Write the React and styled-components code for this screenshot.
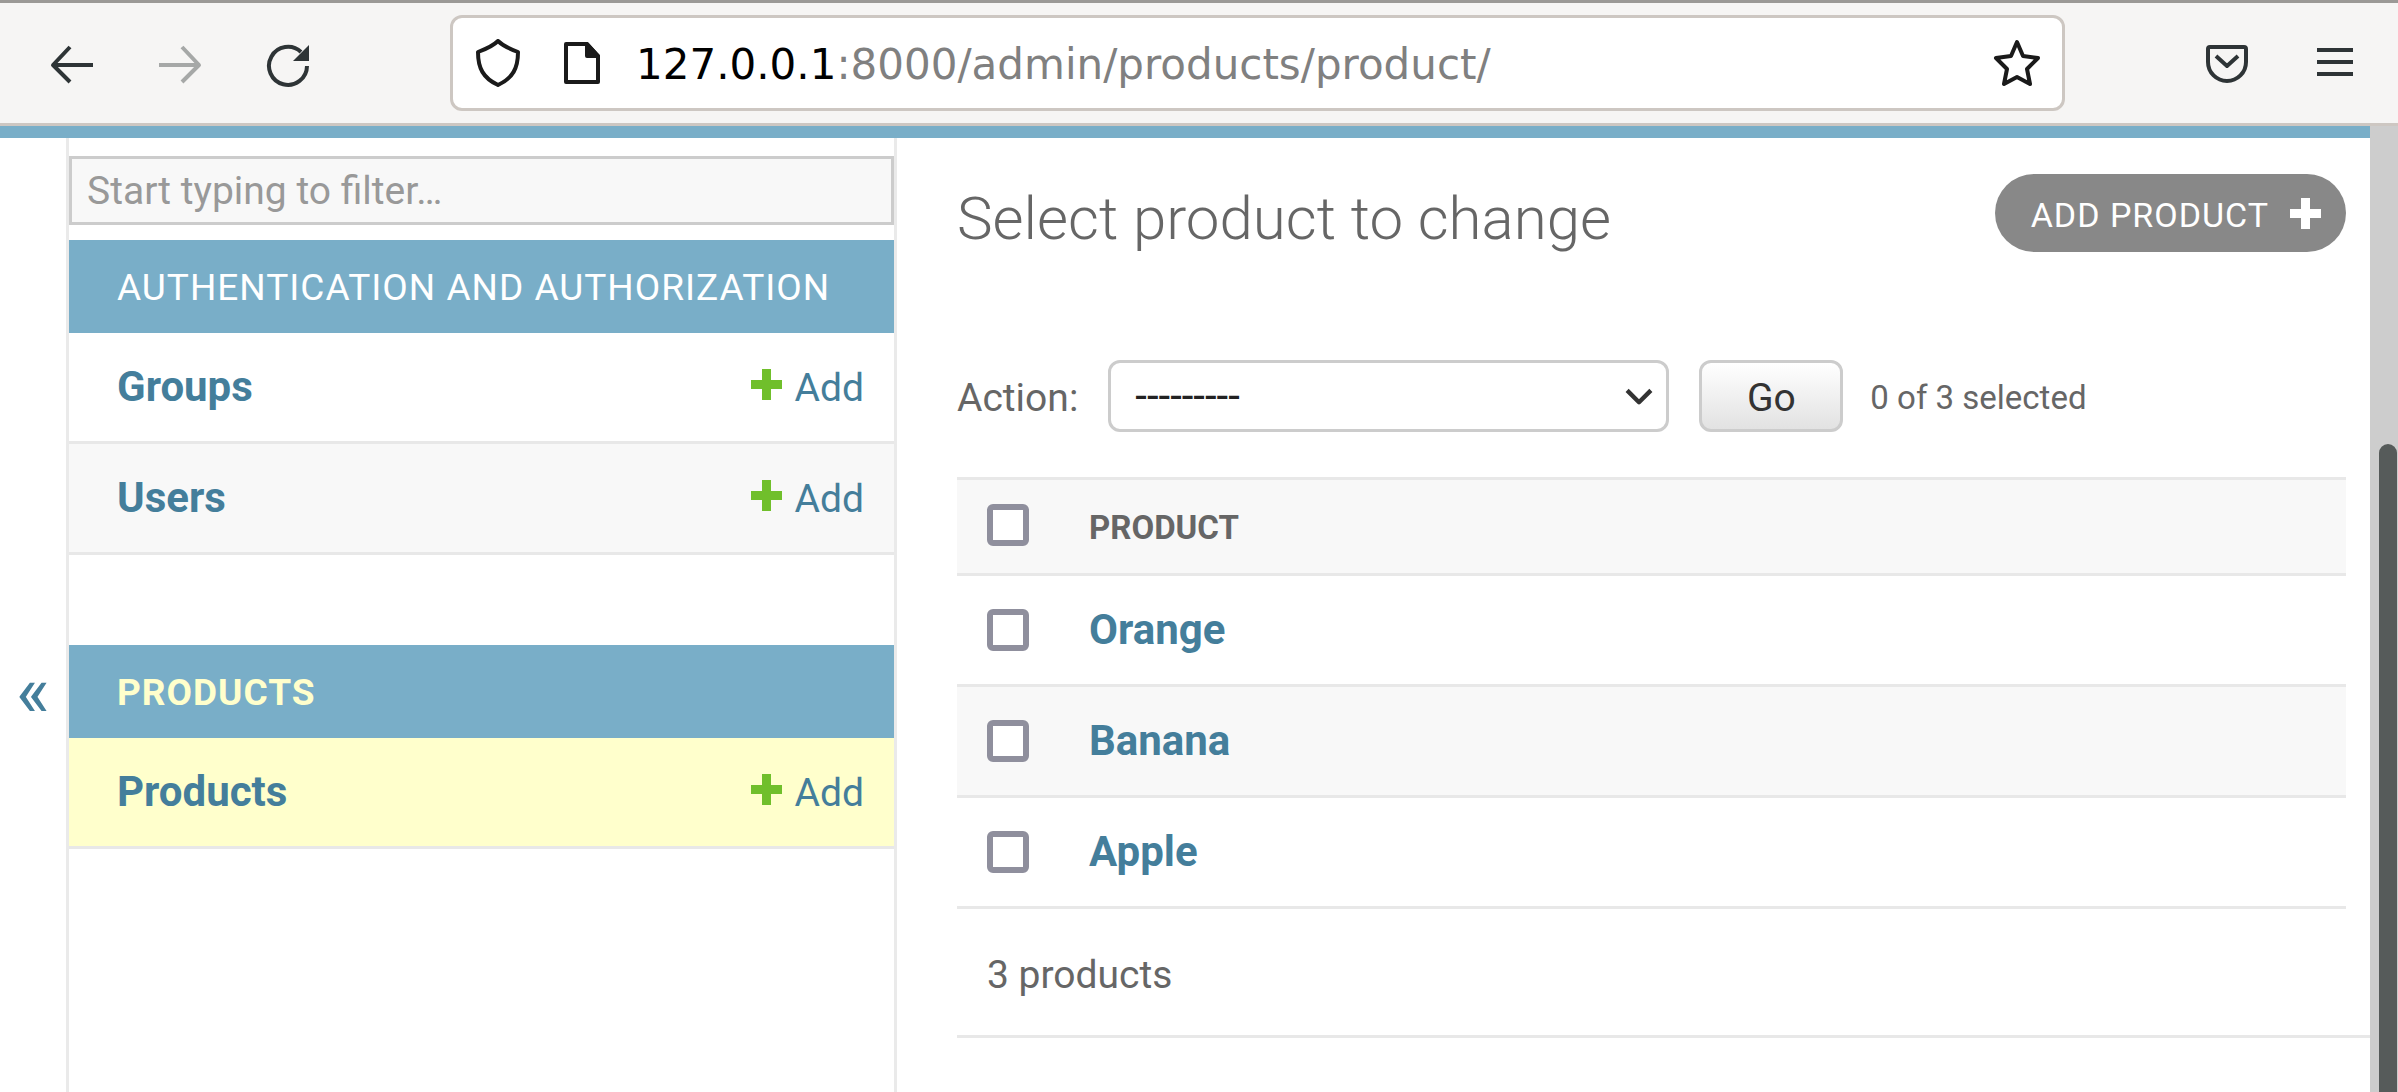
import React from "react";
import styled, { createGlobalStyle } from "styled-components";

const Global = createGlobalStyle`
  * { box-sizing: border-box; }
  html, body, #root { height: 100%; margin: 0; }
  body { background: #fff; color: #666; font: 39px/48px Roboto, "Liberation Sans", sans-serif; }
  a { color: #447e9b; text-decoration: none; }
  button { cursor: pointer; }
`;
const Page = styled.div`display: flex; flex-direction: column; min-height: 100%;`;
const Toolbar = styled.header`
  display: flex; align-items: center; height: 126px; padding: 0 36px 0 45px;
  background: #f6f5f4; border-top: 3px solid #9b9996; border-bottom: 3px solid #cdc7c2;
`;
const IconButton = styled.button`
  display: flex; align-items: center; justify-content: center; width: 54px; height: 54px;
  padding: 0; border: 0; background: none; color: #2e3436;
  &:disabled { color: #a6a8a7; }
`;
const NavButtons = styled.nav`display: flex; gap: 54px;`;
const UrlBar = styled.div`
  display: flex; align-items: center; gap: 36px; flex: 1; height: 96px;
  margin: 0 135px; padding: 0 18px 0 21px; color: #1a1a1a;
  background: #fff; border: 3px solid #cdc7c2; border-radius: 12px;
  button { color: inherit; }
`;
const SiteIcons = styled.div`display: flex; gap: 42px;`;
const Url = styled.div`
  flex: 1; padding-top: 3px; font: 42px/54px "DejaVu Sans", sans-serif; color: #808080; white-space: nowrap;
  b { font-weight: 400; color: #000; }
`;
const ToolbarEnd = styled.div`display: flex; gap: 54px;`;
const Viewport = styled.div`display: flex; flex: 1;`;
const Site = styled.div`display: flex; flex: 1; border-top: 12px solid #79aec8;`;
const SidebarToggle = styled.button`
  width: 69px; padding: 153px 0 0; border: 0; border-right: 3px solid #eaeaea;
  background: #fff; color: #447e9b; font: 72px/72px Roboto, sans-serif;
`;
const Sidebar = styled.nav`width: 828px; padding-top: 18px; border-right: 3px solid #eaeaea;`;
const Filter = styled.input`
  display: block; width: 100%; height: 69px; margin-bottom: 15px; padding: 0 15px;
  border: 3px solid #ccc; border-radius: 0; background: #f8f8f8; font: 39px/48px Roboto, sans-serif;
  &::placeholder { color: #999; opacity: 1; }
`;
const AppTable = styled.table`width: 100%; margin-bottom: 90px; border-collapse: separate; border-spacing: 0;`;
const Caption = styled.caption`
  padding: 3px 48px 0; background: #79aec8; color: ${p => (p.$current ? "#ffc" : "#fff")};
  font-size: 37px; line-height: 90px; letter-spacing: 1px; text-align: left; text-transform: uppercase;
  font-weight: ${p => (p.$current ? 700 : 400)};
`;
const ModelRow = styled.tr`
  background: ${p => (p.$current ? "#ffc" : "#fff")};
  &:nth-child(even) { background: #f8f8f8; }
  > * { vertical-align: baseline; border-bottom: 3px solid #e8e8e8; }
`;
const ModelName = styled.th`padding: 30px 48px; text-align: left; font-size: 42px; line-height: 48px;`;
const AddCell = styled.td`padding: 0 30px; text-align: right;`;
const AddLink = styled.a`display: inline-flex; align-items: baseline; gap: 12px;`;
const Main = styled.main`flex: 1; padding: 36px 0 0 60px;`;
const Heading = styled.div`display: flex; justify-content: space-between; height: 186px; padding-right: 24px;`;
const Title = styled.h1`margin: 0; padding-top: 9px; font-size: 60px; line-height: 72px; font-weight: 300;`;
const AddButton = styled.a`
  display: flex; align-items: center; gap: 20px; height: 78px; padding: 0 24px 0 36px;
  border-radius: 39px; background: #888; color: #fff;
  font-size: 34px; letter-spacing: 1px; text-transform: uppercase;
`;
const Text = styled.span`padding-top: 3px;`;
const Actions = styled.div`display: flex; align-items: center; height: 72px; margin-bottom: 45px;`;
const ActionLabel = styled.label`display: flex; align-items: center; gap: 30px;`;
const SelectBox = styled.span`
  display: grid; align-items: center; width: 561px; color: #333;
  > * { grid-area: 1 / 1; }
  svg { justify-self: end; margin-right: 15px; pointer-events: none; }
`;
const Select = styled.select`
  appearance: none; width: 100%; height: 72px; padding: 0 24px; border: 3px solid #ccc; border-radius: 12px;
  background: #fff; color: #222; font: 42px/48px Roboto, sans-serif;
`;
const Go = styled.button`
  width: 144px; height: 72px; margin: 0 27px 0 30px; padding: 3px 0 0; border: 3px solid #ccc; border-radius: 12px;
  background: linear-gradient(#fff, #e2e2e2); color: #333; font: 39px/48px Roboto, sans-serif;
`;
const Counter = styled(Text)`font-size: 33px;`;
const Results = styled.table`width: calc(100% - 24px); border-collapse: collapse; border-top: 3px solid #e8e8e8;`;
const ResultRow = styled.tr`
  height: 111px; border-bottom: 3px solid #e8e8e8; font-size: 42px;
  &:nth-child(even) { background: #f8f8f8; }
`;
const HeadRow = styled.tr`height: 96px; border-bottom: 3px solid #e8e8e8; background: #f8f8f8; font-size: 33px;`;
const Cell = styled.th`padding: 0 30px; text-align: left;`;
const HeadCell = styled(Cell)`padding-top: 3px;`;
const CheckCell = styled.td`width: 102px; padding: 0 30px;`;
const HeadCheckCell = styled(CheckCell)`padding-bottom: 3px;`;
const Check = styled.input`
  appearance: none; display: block; width: 42px; height: 42px; margin: 0;
  border: 6px solid #8f8f9d; border-radius: 6px; background: #fff;
`;
const Paginator = styled.p`margin: 0; height: 129px; padding: 42px 30px 0; border-bottom: 3px solid #e8e8e8;`;
const Scrollbar = styled.div`width: 28px; padding: 318px 1px 0 9px; background: #cdcdcd; display: flex;`;
const Thumb = styled.div`flex: 1; background: #565b5a; border-radius: 9px 9px 0 0;`;

const Stroke = ({ size = 48, box = 48, w = 4, children }) => (
  <svg width={size} height={size === 36 ? 48 : size} viewBox={`0 0 ${box} 48`} fill="none" stroke="currentColor" strokeWidth={w} strokeLinejoin="round" aria-hidden="true">{children}</svg>
);
const Plus = ({ color }) => (
  <svg width="33" height="33" viewBox="0 0 33 33" aria-hidden="true"><path fill={color} d="M12 1h9v11h11v9H21v11h-9V21H1v-9h11z" /></svg>
);

const Models = ({ name, current, items }) => (
  <AppTable>
    <Caption $current={current}>{name}</Caption>
    <tbody>
      {items.map(item => (
        <ModelRow key={item} $current={current}>
          <ModelName scope="row"><a href="#model">{item}</a></ModelName>
          <AddCell><AddLink href="#add"><Plus color="#70bf2b" />Add</AddLink></AddCell>
        </ModelRow>
      ))}
    </tbody>
  </AppTable>
);

export default function App() {
  return (
    <Page>
      <Global />
      <Toolbar>
        <NavButtons aria-label="Browser">
          <IconButton aria-label="Back"><Stroke><path d="M45 26H5M22 8L5 26l17 17" /></Stroke></IconButton>
          <IconButton aria-label="Forward" disabled><Stroke><path d="M3 26h40M26 8l17 18-17 17" /></Stroke></IconButton>
          <IconButton aria-label="Reload"><Stroke><path d="M43 27a19 19 0 1 1-6-14" /><path fill="currentColor" stroke="none" d="M45 6v16H29z" /></Stroke></IconButton>
        </NavButtons>
        <UrlBar>
          <SiteIcons>
            <Stroke><path d="M24 2c-5 5-12 8-20 11 0 16 5 26 20 33 15-7 20-17 20-33C36 10 29 7 24 2z" /></Stroke>
            <Stroke size={36} box={36}><path d="M2 5h21l11 12v26H2z" /><path fill="currentColor" d="M23 5v12h11z" /></Stroke>
          </SiteIcons>
          <Url><b>127.0.0.1</b>:8000/admin/products/product/</Url>
          <IconButton aria-label="Bookmark"><Stroke><path d="M24 3l6 14 15 2-11 11 3 15-13-7-13 7 3-15L3 19l15-2z" /></Stroke></IconButton>
        </UrlBar>
        <ToolbarEnd>
          <IconButton aria-label="Pocket"><Stroke><path d="M7 8h34a2 2 0 0 1 2 2v13a19 19 0 0 1-38 0V10a2 2 0 0 1 2-2zM13 17l11 10 11-10" /></Stroke></IconButton>
          <IconButton aria-label="Menu"><Stroke><path d="M6 11h36M6 23h36M6 35h36" /></Stroke></IconButton>
        </ToolbarEnd>
      </Toolbar>
      <Viewport>
        <Site>
          <SidebarToggle aria-label="Toggle navigation">«</SidebarToggle>
          <Sidebar aria-label="Models">
            <Filter type="search" placeholder="Start typing to filter…" aria-label="Filter navigation items" />
            <Models name="Authentication and Authorization" items={["Groups", "Users"]} />
            <Models name="Products" current items={["Products"]} />
          </Sidebar>
          <Main>
            <Heading>
              <Title>Select product to change</Title>
              <AddButton href="#add"><Text>Add product</Text><Plus color="#fff" /></AddButton>
            </Heading>
            <Actions>
              <ActionLabel>
                <Text>Action:</Text>
                <SelectBox>
                  <Select><option>---------</option></Select>
                  <Stroke size={30} w={7}><path d="M5 15l19 19 19-19" /></Stroke>
                </SelectBox>
              </ActionLabel>
              <Go>Go</Go>
              <Counter>0 of 3 selected</Counter>
            </Actions>
            <Results>
              <thead>
                <HeadRow>
                  <HeadCheckCell><Check type="checkbox" aria-label="Select all" /></HeadCheckCell>
                  <HeadCell scope="col">PRODUCT</HeadCell>
                </HeadRow>
              </thead>
              <tbody>
                {["Orange", "Banana", "Apple"].map(n => (
                  <ResultRow key={n}>
                    <CheckCell><Check type="checkbox" aria-label={`Select ${n}`} /></CheckCell>
                    <Cell scope="row"><a href="#product">{n}</a></Cell>
                  </ResultRow>
                ))}
              </tbody>
            </Results>
            <Paginator>3 products</Paginator>
          </Main>
        </Site>
        <Scrollbar><Thumb /></Scrollbar>
      </Viewport>
    </Page>
  );
}
